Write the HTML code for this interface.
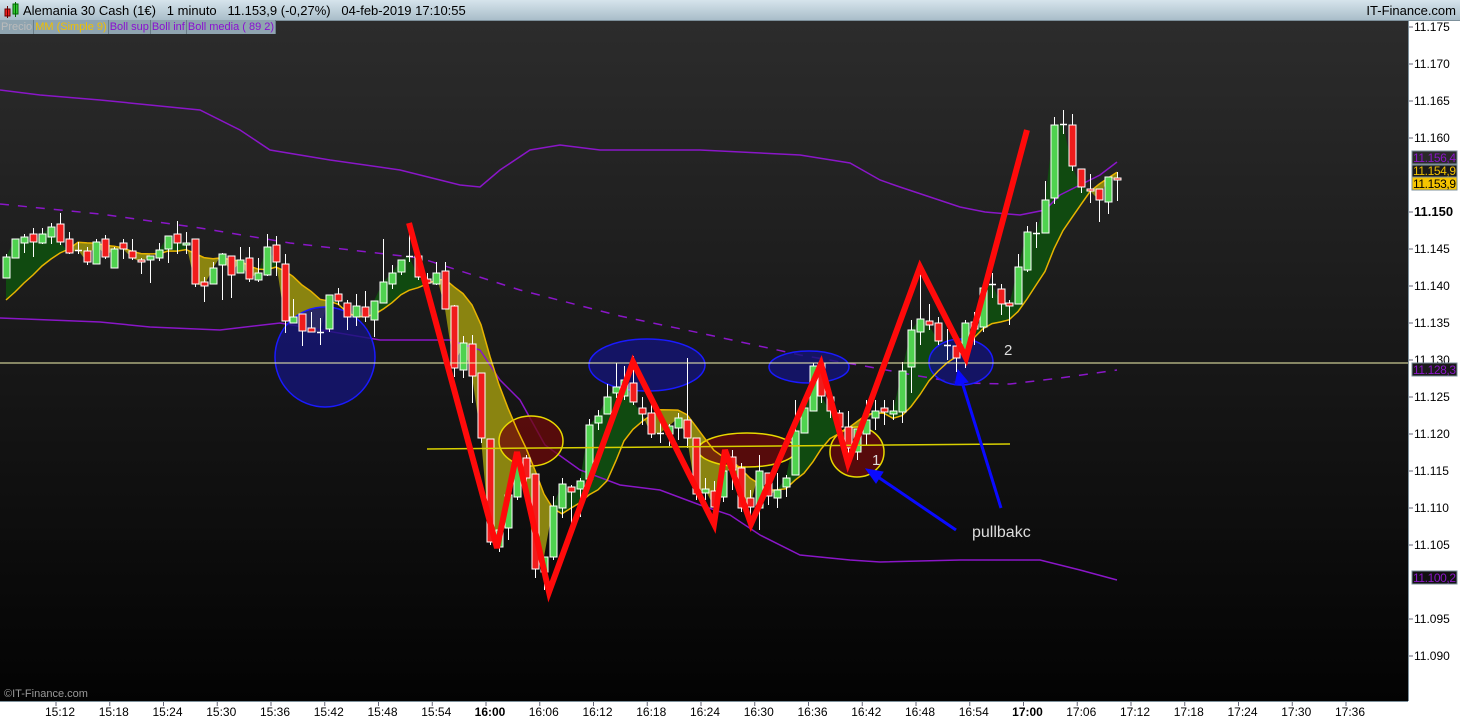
<!DOCTYPE html>
<html><head><meta charset="utf-8"><style>
html,body{margin:0;padding:0;width:1460px;height:720px;overflow:hidden;background:#000;font-family:"Liberation Sans",sans-serif}
#top{position:absolute;left:0;top:0;width:1460px;height:20px;background:linear-gradient(#d6e4ec,#a9bdc9);border-bottom:1px solid #7d909b}
#top .t{position:absolute;left:23px;top:3px;font-size:13px;color:#000}
#top .r{position:absolute;right:4px;top:3px;font-size:13px;color:#000}
#leg{position:absolute;left:0;top:20px;height:14px;display:flex}
#leg span{display:block;background:#8fa4b0;border-right:1px solid #6a7d88;font-size:11px;line-height:14px;padding:0 1px;height:14px}
</style></head><body>
<svg id="s" width="1460" height="720" style="position:absolute;left:0;top:0">
<defs><linearGradient id="bg" x1="0" y1="0" x2="0" y2="1"><stop offset="0" stop-color="#2c2c2c"/><stop offset="1" stop-color="#030303"/></linearGradient></defs>
<rect x="0" y="20" width="1408" height="681" fill="url(#bg)"/>
<g id="fills"></g>
<polyline fill="none" stroke="#8a16c8" stroke-width="1.5" points="0,90 40,95 100,100 200,110 240,130 270,150 330,160 400,170 460,185 480,187 500,170 530,150 560,145 600,150 700,150 800,155 850,163 880,180 900,187 960,207 985,212 1020,215 1045,210 1060,195 1100,175 1117,162"/>
<polyline fill="none" stroke="#8a16c8" stroke-width="1.5" points="0,318 100,322 150,327 220,330 280,323 380,340 450,340 480,350 500,380 520,400 545,445 580,470 620,485 660,490 700,505 730,515 760,535 800,555 850,560 880,562 960,560 1040,560 1080,570 1117,580"/>
<polyline fill="none" stroke="#8a16c8" stroke-width="1.5" stroke-dasharray="9,9" points="0,204 100,214 200,228 290,243 420,258 520,290 620,316 700,333 800,355 870,367 913,375 960,383 1010,384 1060,378 1117,370"/>
<g fill="rgba(20,20,120,0.8)" stroke="#1a1aff" stroke-width="1.5">
<circle cx="325" cy="357" r="50"/>
<ellipse cx="647" cy="365" rx="58" ry="26"/>
<ellipse cx="809" cy="367" rx="40" ry="16"/>
<ellipse cx="961" cy="362" rx="32" ry="23"/>
</g>
<g fill="rgba(110,10,10,0.75)" stroke="#e8d800" stroke-width="1.5">
<ellipse cx="531" cy="441" rx="32" ry="25"/>
<ellipse cx="747" cy="450" rx="49" ry="17"/>
<ellipse cx="857" cy="452" rx="27" ry="25"/>
</g>
<g id="ma"></g>
<g id="cd"></g>
<line x1="0" y1="363" x2="1408" y2="363" stroke="#f4f4b0" stroke-width="1"/>
<line x1="427" y1="449" x2="1010" y2="444" stroke="#d8d000" stroke-width="1.5"/>
<polyline fill="none" stroke="#ff0a0a" stroke-width="6" stroke-linejoin="miter" points="409,223 497,548 517,452 549,592 633,362 714,524 725,450 751,524 821,364 848,463 920,267 966,358 1027,130"/>
<g stroke="#0a0aff" stroke-width="3" fill="#0a0aff">
<line x1="1001" y1="508" x2="962" y2="382"/>
<polygon points="958,370 955,385 968,382" stroke-width="1"/>
<line x1="956" y1="530" x2="878" y2="477"/>
<polygon points="866,469 876,483 883,472" stroke-width="1"/>
</g>
<g font-family="Liberation Sans,sans-serif" fill="#ddd">
<text x="972" y="537" font-size="16">pullbakc</text>
<text x="872" y="465" font-size="15">1</text>
<text x="1004" y="355" font-size="15">2</text>
<text x="4" y="697" font-size="11" fill="#9a9a9a">©IT-Finance.com</text>
</g>
<rect x="1408" y="20" width="52" height="700" fill="#fff"/>
<line x1="1408.5" y1="20" x2="1408.5" y2="720" stroke="#7d909b"/>
<rect x="0" y="701" width="1460" height="19" fill="#fff"/>
<line x1="0" y1="701.5" x2="1408" y2="701.5" stroke="#7d909b"/>
<g id="ax" font-family="Liberation Sans,sans-serif" font-size="12" fill="#000"></g>
<g font-family="Liberation Sans,sans-serif" font-size="12">
<rect x="1412" y="151" width="45" height="13" fill="#2a2a2a" stroke="#7d909b"/><text x="1413" y="162" fill="#8a16c8" textLength="43">11.156,4</text>
<rect x="1412" y="165" width="45" height="12" fill="#1a1a1a" stroke="#7d909b"/><text x="1413" y="175" fill="#f0c000" textLength="43">11.154,9</text>
<rect x="1412" y="177" width="45" height="13" fill="#f5c400" stroke="#7d909b"/><text x="1413" y="188" fill="#000" textLength="43">11.153,9</text>
<rect x="1412" y="363" width="45" height="13" fill="#1a1a1a" stroke="#7d909b"/><text x="1413" y="374" fill="#8a16c8" textLength="43">11.128,3</text>
<rect x="1412" y="571" width="45" height="13" fill="#111" stroke="#7d909b"/><text x="1413" y="582" fill="#8a16c8" textLength="43">11.100,2</text>
</g>
</svg>
<div id="top"><svg width="18" height="18" style="position:absolute;left:3px;top:1px"><rect x="2" y="8" width="5" height="7" fill="#e22" stroke="#600"/><line x1="4.5" y1="5" x2="4.5" y2="17" stroke="#600"/><rect x="10" y="3" width="5" height="10" fill="#3c3" stroke="#060"/><line x1="12.5" y1="1" x2="12.5" y2="16" stroke="#060"/></svg>
<div class="t">Alemania 30 Cash (1€)&nbsp;&nbsp;&nbsp;1 minuto&nbsp;&nbsp;&nbsp;11.153,9 (-0,27%)&nbsp;&nbsp;&nbsp;04-feb-2019 17:10:55</div><div class="r">IT-Finance.com</div></div>
<div id="leg"><span style="color:#bbb">Precio</span><span style="color:#f0c000">MM (Simple 9)</span><span style="color:#8a10d0">Boll sup</span><span style="color:#8a10d0">Boll inf</span><span style="color:#8a10d0">Boll media ( 89 2)</span></div>
<script>
var C=[[6,278,257,254,278],[15,258,239,239,258],[24,243,237,234,253],[33,234,242,228,257],[42,243,234,228,244],[51,237,227,223,244],[60,224,242,213,245],[69,239,253,232,254],[78,250,250,242,254],[87,251,262,247,265],[96,264,242,239,264],[105,239,257,235,259],[114,268,249,247,268],[123,243,249,239,259],[132,251,258,239,260],[141,260,262,258,274],[150,260,256,256,283],[159,258,250,243,261],[168,249,236,236,263],[177,234,243,221,254],[186,245,243,232,254],[195,239,284,239,287],[204,282,286,277,302],[213,284,268,262,284],[222,265,254,253,300],[231,256,275,256,298],[240,273,260,247,273],[249,258,279,247,282],[258,280,273,258,282],[267,275,247,234,276],[276,245,262,236,276],[285,264,321,254,333],[293,323,317,299,323],[302,314,331,314,346],[311,328,332,312,332],[320,332,332,318,345],[329,329,295,295,332],[338,294,301,288,305],[347,303,317,300,330],[356,317,306,294,326],[365,307,317,291,322],[374,320,301,301,337],[383,303,282,239,303],[392,284,273,265,289],[401,272,260,260,275],[409,256,256,230,262],[418,256,277,256,280],[427,279,283,273,283],[436,284,273,262,285],[445,271,309,262,309],[454,306,368,305,377],[463,370,343,336,378],[472,344,376,335,403],[481,373,438,373,443],[490,439,542,439,545],[499,547,530,530,552],[508,528,495,495,540],[517,497,462,462,500],[526,458,478,455,502],[535,474,569,474,578],[544,572,557,557,590],[553,557,506,496,560],[562,508,484,478,518],[571,487,492,485,533],[580,489,481,478,517],[589,479,425,419,479],[598,423,416,410,430],[607,414,397,384,414],[616,393,387,363,398],[624,396,380,366,400],[633,383,402,356,405],[642,408,414,397,425],[651,413,434,400,438],[660,433,433,415,443],[669,434,426,424,446],[678,428,418,413,440],[687,420,438,358,448],[696,438,494,438,500],[705,493,489,478,500],[714,491,507,481,510],[723,497,471,470,502],[732,457,470,450,490],[741,468,508,463,512],[750,498,507,490,528],[759,508,471,455,530],[768,473,496,473,505],[777,498,490,473,508],[786,487,478,475,497],[795,475,431,400,475],[804,433,408,400,433],[813,411,366,363,411],[821,363,396,360,403],[830,397,411,396,418],[839,413,427,410,440],[848,427,448,411,460],[857,452,429,430,460],[866,434,420,400,445],[875,418,411,400,430],[884,408,412,400,425],[893,414,411,400,420],[902,412,371,362,423],[911,367,330,320,393],[920,332,319,274,345],[929,321,325,304,330],[938,323,341,317,345],[947,345,345,329,360],[956,346,358,341,372],[965,352,323,320,368],[974,322,329,312,345],[983,327,288,288,332],[992,284,284,273,298],[1001,289,304,284,315],[1009,303,306,300,325],[1018,304,267,254,304],[1027,270,232,226,272],[1036,233,233,222,248],[1045,233,200,181,233],[1054,198,125,117,204],[1063,124,124,110,134],[1072,125,166,114,171],[1081,169,187,169,193],[1090,189,191,174,203],[1099,189,200,189,222],[1108,202,177,177,214],[1117,178,180,172,201]];
var ns="http://www.w3.org/2000/svg";function el(t,a,p){var e=document.createElementNS(ns,t);for(var k in a)e.setAttribute(k,a[k]);p.appendChild(e);return e}
var cd=document.getElementById('cd'),fl=document.getElementById('fills'),ma=document.getElementById('ma');
var m=[],pts=[];
for(var i=0;i<C.length;i++){var s=0,n=0;for(var j=Math.max(0,i-8);j<=i;j++){s+=C[j][2];n++}m.push(s/n)}
m[0]=300;m[1]=292;m[2]=283;m[3]=275;m[4]=266;m[5]=259;m[6]=253;m[7]=249;
for(i=0;i<C.length;i++)pts.push(C[i][0]+','+m[i].toFixed(1));
for(i=0;i<C.length-1;i++){var x0=C[i][0],x1=C[i+1][0],c0=C[i][2],c1=C[i+1][2];var up=(c0+c1)<(m[i]+m[i+1]);
el('polygon',{points:x0+','+m[i]+' '+x1+','+m[i+1]+' '+x1+','+c1+' '+x0+','+c0,fill:up?'#104a10':'#8a8410'},fl);}
el('polyline',{points:pts.join(' '),fill:'none',stroke:'#e8b400','stroke-width':1.5},ma);
C.forEach(function(c){var x=c[0],t=Math.min(c[1],c[2]),b=Math.max(c[1],c[2]);
el('line',{x1:x+.5,y1:c[3],x2:x+.5,y2:c[4],stroke:'#fff','stroke-width':1},cd);
if(b-t<1.5){el('line',{x1:x-3,y1:t+.5,x2:x+4,y2:t+.5,stroke:'#fff','stroke-width':1.5},cd)}
else el('rect',{x:x-3,y:t,width:7,height:b-t,fill:c[2]<c[1]?'#4fd24f':'#f01c1c',stroke:'#fff','stroke-width':1},cd)});
var ax=document.getElementById('ax');
var pr=['11.175','11.170','11.165','11.160',null,'11.150','11.145','11.140','11.135','11.130','11.125','11.120','11.115','11.110','11.105',null,'11.095','11.090'];
pr.forEach(function(p,k){if(!p)return;var y=27+k*37;el('line',{x1:1409,y1:y,x2:1413,y2:y,stroke:'#667'},ax);var t=el('text',{x:1414,y:y+4},ax);t.textContent=p;if(p=='11.150'){t.setAttribute('font-weight','bold');t.setAttribute('font-size','13')}});
var tm=['15:12','15:18','15:24','15:30','15:36','15:42','15:48','15:54','16:00','16:06','16:12','16:18','16:24','16:30','16:36','16:42','16:48','16:54','17:00','17:06','17:12','17:18','17:24','17:30','17:36'];
tm.forEach(function(s,k){var x=60+k*53.75;el('line',{x1:x-4,y1:702,x2:x-4,y2:706,stroke:'#667'},ax);var t=el('text',{x:x,y:716,'text-anchor':'middle'},ax);t.textContent=s;if(s=='16:00'||s=='17:00')t.setAttribute('font-weight','bold')});
</script>
</body></html>
